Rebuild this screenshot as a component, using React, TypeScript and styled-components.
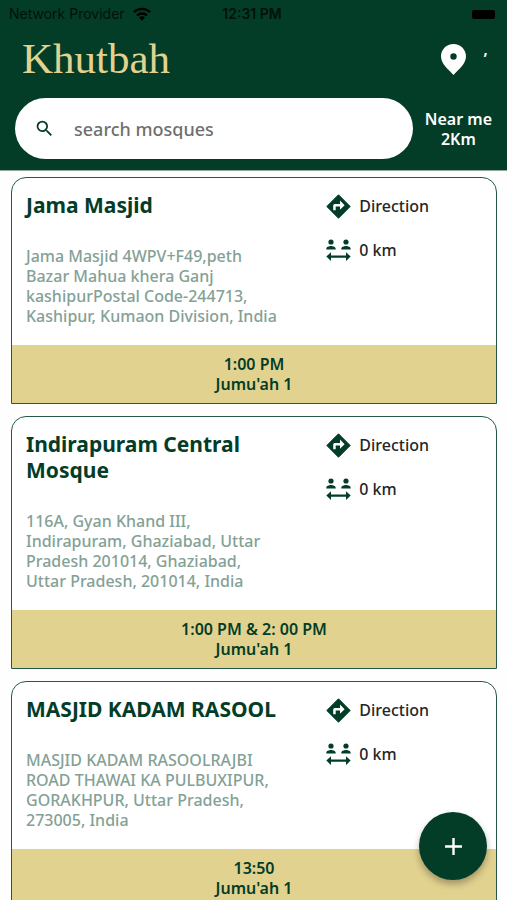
import React from "react";
import styled, { createGlobalStyle } from "styled-components";
import { MdSearch, MdAdd } from "react-icons/md";

const GREEN = "#033d28";
const SAND = "#e2d28f";

const GlobalStyle = createGlobalStyle`
  *, *::before, *::after { box-sizing: border-box; }
  body {
    margin: 0;
    background: #fdfefd;
    color: #262626;
    font-family: "Noto Sans", sans-serif;
    font-size: 16px;
    line-height: 20px;
  }
  h1, h2, p { margin: 0; }
  button, input { font: inherit; }
`;

const Screen = styled.div`
  height: 100vh;
  display: flex;
  flex-direction: column;
  overflow: hidden;
`;

const Header = styled.header`
  flex: none;
  background: ${GREEN};
  border-bottom: 1px solid #8fa99d;
`;

const StatusBar = styled.div`
  display: grid;
  grid-template-columns: 1fr auto 1fr;
  align-items: center;
  height: 28px;
  padding: 0 12px 0 9px;
  color: #021109;
  font-family: Inter, sans-serif;
  font-size: 14px;
`;

const Carrier = styled.div`
  display: flex;
  align-items: center;
  gap: 8px;
`;

const Clock = styled.time`
  font-size: 14px;
  font-weight: 600;
`;

const Battery = styled.div`
  justify-self: end;
  width: 23px;
  height: 9px;
  border-radius: 2px;
  background: #000;
`;

const TitleRow = styled.div`
  display: flex;
  align-items: center;
  justify-content: space-between;
  height: 62px;
  padding: 0 20px 0 22px;
`;

const AppTitle = styled.h1`
  color: ${SAND};
  font-family: "Liberation Serif", serif;
  font-size: 43px;
  font-weight: 400;
  line-height: 60px;
`;

const LocationButton = styled.button`
  display: flex;
  align-items: center;
  gap: 18px;
  padding: 0;
  border: 0;
  background: none;
  color: #fff;
  font-weight: 600;
`;

const SearchRow = styled.div`
  display: flex;
  align-items: center;
  gap: 12px;
  padding: 8px 15px 11px;
`;

const SearchBox = styled.label`
  flex: 1;
  min-width: 0;
  display: flex;
  align-items: center;
  gap: 19px;
  height: 61px;
  padding: 0 20px 0 19px;
  border-radius: 31px;
  background: #fff;
  color: ${GREEN};
  svg { flex: none; }
`;

const SearchInput = styled.input`
  flex: 1;
  min-width: 0;
  padding: 0;
  border: 0;
  outline: 0;
  background: none;
  color: ${GREEN};
  font-size: 18px;
  font-weight: 500;
  &::placeholder { color: #6f6f6f; opacity: 1; }
`;

const NearMe = styled.button`
  padding: 0;
  border: 0;
  background: none;
  color: #fff;
  font-weight: 600;
  text-align: center;
`;

const List = styled.main`
  flex: 1;
  min-height: 0;
  overflow: hidden;
  display: flex;
  flex-direction: column;
  gap: 12px;
  padding: 6px 10px 0 11px;
`;

const Card = styled.article`
  flex: none;
  overflow: hidden;
  border: 1px solid #265a47;
  border-radius: 15px 15px 0 0;
  background: #fff;
`;

const CardBody = styled.div`
  display: grid;
  grid-template-columns: 13fr 7fr;
  padding: 14px 8px 19px 14px;
`;

const MosqueName = styled.h2`
  margin-bottom: 28px;
  color: ${GREEN};
  font-size: 21px;
  font-weight: 700;
  line-height: 26px;
`;

const Address = styled.p`
  color: #84a196;
  font-weight: 500;
`;

const Line = styled.span`
  display: block;
  white-space: nowrap;
`;

const Actions = styled.div`
  display: flex;
  flex-direction: column;
  align-items: flex-start;
  gap: 16px;
`;

const Action = styled.div`
  display: flex;
  align-items: center;
  gap: 8px;
  height: 28px;
  font-weight: 500;
  svg { flex: none; }
`;

const DirectionLink = styled(Action).attrs({ as: "a" })<{ href: string }>`
  color: inherit;
  text-decoration: none;
`;

const Times = styled.div`
  padding: 9px 12px;
  background: ${SAND};
  color: ${GREEN};
  font-weight: 600;
  text-align: center;
`;

const AddButton = styled.button`
  position: fixed;
  right: 20px;
  bottom: 20px;
  display: grid;
  place-items: center;
  width: 68px;
  height: 68px;
  padding: 0;
  border: 0;
  border-radius: 50%;
  background: ${GREEN};
  color: #fff;
  box-shadow: 0 4px 7px rgba(0, 0, 0, 0.3);
`;

const WifiIcon = () => (
  <svg width="18" height="14" viewBox="0 0 18 14" aria-hidden="true">
    <g fill="none" stroke="#000" strokeWidth="2.4">
      <path d="M1 5.2a11.4 11.4 0 0 1 16 0" />
      <path d="M4 8.5a7.2 7.2 0 0 1 10 0" />
    </g>
    <path fill="#000" d="M9 13.8 5.9 10.6a4.5 4.5 0 0 1 6.2 0z" />
  </svg>
);

const PinIcon = () => (
  <svg width="25" height="31" viewBox="0 0 25 31" aria-hidden="true">
    <path
      fill="currentColor"
      fillRule="evenodd"
      d="M12.5 0C5.6 0 0 5.5 0 12.3 0 20 7 25 12.5 31 18 25 25 20 25 12.3 25 5.5 19.4 0 12.5 0zm0 9.3a3.2 3.2 0 1 1 0 6.4 3.2 3.2 0 0 1 0-6.4z"
    />
  </svg>
);

const DirectionIcon = () => (
  <svg width="25" height="25" viewBox="0 0 25 25" aria-hidden="true">
    <path
      fill={GREEN}
      stroke={GREEN}
      strokeLinejoin="round"
      strokeWidth="1"
      d="M12.5.8 24.2 12.5 12.5 24.2.8 12.5z"
    />
    <path
      fill="#fff"
      d="M7.2 16.3V11.4q0-1.5 1.5-1.5h5.3V6.6l4.6 4.6-4.6 4.6v-3.4H9.7v3.9z"
    />
  </svg>
);

const DistanceIcon = () => (
  <svg width="25" height="23" viewBox="0 0 25 23" fill={GREEN} aria-hidden="true">
    <circle cx="5" cy="3" r="2.6" />
    <circle cx="20" cy="3" r="2.6" />
    <path d="M.3 10.6V9.8C.3 7.9 3 7 5 7s4.700.9 4.700 2.800v.8zM15.300 10.600v-.8C15.300 7.900 18 7 20 7s4.700.9 4.700 2.800v.8z" />
    <path d="M.3 17.600 5 13.200v3.200h15v-3.200l4.700 4.400L20 22v-3.200H5V22z" />
  </svg>
);

const mosques = [
  {
    name: ["Jama Masjid"],
    address: [
      "Jama Masjid 4WPV+F49,peth",
      "Bazar Mahua khera Ganj",
      "kashipurPostal Code-244713,",
      "Kashipur, Kumaon Division, India",
    ],
    time: "1:00 PM",
  },
  {
    name: ["Indirapuram Central", "Mosque"],
    address: [
      "116A, Gyan Khand III,",
      "Indirapuram, Ghaziabad, Uttar",
      "Pradesh 201014, Ghaziabad,",
      "Uttar Pradesh, 201014, India",
    ],
    time: "1:00 PM & 2: 00 PM",
  },
  {
    name: ["MASJID KADAM RASOOL"],
    address: [
      "MASJID KADAM RASOOLRAJBI",
      "ROAD THAWAI KA PULBUXIPUR,",
      "GORAKHPUR, Uttar Pradesh,",
      "273005, India",
    ],
    time: "13:50",
  },
];

export default function App() {
  return (
    <Screen>
      <GlobalStyle />
      <Header>
        <StatusBar>
          <Carrier>
            Network Provider
            <WifiIcon />
          </Carrier>
          <Clock>12:31 PM</Clock>
          <Battery />
        </StatusBar>
        <TitleRow>
          <AppTitle>Khutbah</AppTitle>
          <LocationButton aria-label="Choose location">
            <PinIcon />
            <span>’</span>
          </LocationButton>
        </TitleRow>
        <SearchRow>
          <SearchBox>
            <MdSearch size={21} />
            <SearchInput type="search" placeholder="search mosques" aria-label="search mosques" />
          </SearchBox>
          <NearMe>
            Near me
            <br />
            2Km
          </NearMe>
        </SearchRow>
      </Header>
      <List>
        {mosques.map((mosque) => (
          <Card key={mosque.name[0]}>
            <CardBody>
              <div>
                <MosqueName>
                  {mosque.name.map((line) => (
                    <Line key={line}>{line}</Line>
                  ))}
                </MosqueName>
                <Address>
                  {mosque.address.map((line) => (
                    <Line key={line}>{line}</Line>
                  ))}
                </Address>
              </div>
              <Actions>
                <DirectionLink href="#direction">
                  <DirectionIcon />
                  Direction
                </DirectionLink>
                <Action>
                  <DistanceIcon />
                  0 km
                </Action>
              </Actions>
            </CardBody>
            <Times>
              <p>{mosque.time}</p>
              <p>Jumu'ah 1</p>
            </Times>
          </Card>
        ))}
      </List>
      <AddButton aria-label="Add mosque">
        <MdAdd size={29} />
      </AddButton>
    </Screen>
  );
}
